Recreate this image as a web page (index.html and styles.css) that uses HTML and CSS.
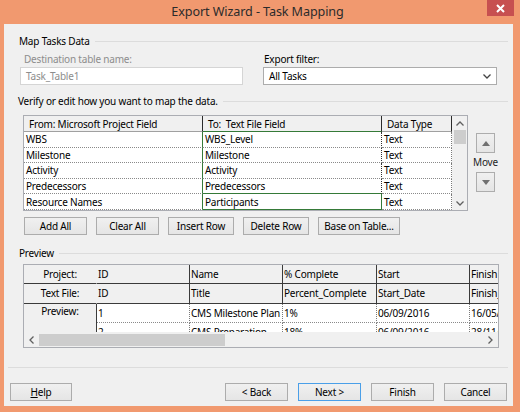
FILE: index.html
```html
<!DOCTYPE html>
<html lang="en">
<head>
  <meta charset="UTF-8">
  <title>Export Wizard - Task Mapping</title>
  <link rel="stylesheet" href="styles.css">
</head>
<body>
  <div class="window">
    <div class="titlebar">
      <div class="title">Export Wizard - Task Mapping</div>
      <button class="close-btn" aria-label="Close">
        <svg width="9" height="9" viewBox="0 0 9 9"><path d="M1 1L8 8M8 1L1 8" stroke="#fff" stroke-width="2"/></svg>
      </button>
    </div>

    <div class="panel">
      <!-- Destination / filter -->
      <div class="group-head">Map Tasks Data</div>
      <div class="fields">
        <div class="field field-dest">
          <label>Destination table name:</label>
          <div class="textbox">Task_Table1</div>
        </div>
        <div class="field field-filter">
          <label>Export filter:</label>
          <div class="select">
            <span>All Tasks</span>
            <svg width="8" height="5" viewBox="0 0 8 5"><path d="M0.5 0.5L4 4L7.5 0.5" fill="none" stroke="#444" stroke-width="1.3"/></svg>
          </div>
        </div>
      </div>

      <!-- Field mapping -->
      <div class="group-head verify">Verify or edit how you want to map the data.</div>
      <div class="mapping">
        <div class="map-grid">
          <table class="map-table">
            <colgroup><col class="c-from"><col class="c-to"><col class="c-type"></colgroup>
            <thead>
              <tr><th>From: Microsoft Project Field</th><th class="to-head">To:&nbsp; Text File Field</th><th>Data Type</th></tr>
            </thead>
            <tbody>
              <tr><td>WBS</td><td>WBS_Level</td><td>Text</td></tr>
              <tr><td>Milestone</td><td>Milestone</td><td>Text</td></tr>
              <tr><td>Activity</td><td>Activity</td><td>Text</td></tr>
              <tr><td>Predecessors</td><td class="above-sel">Predecessors</td><td>Text</td></tr>
              <tr><td>Resource Names</td><td class="selected">Participants</td><td>Text</td></tr>
            </tbody>
          </table>
          <div class="vscroll">
            <div class="arrow"><svg width="8" height="5" viewBox="0 0 8 5"><path d="M0.5 4.5L4 1L7.5 4.5" fill="none" stroke="#606060" stroke-width="1.3"/></svg></div>
            <div class="vthumb"></div>
            <div class="track"></div>
            <div class="arrow"><svg width="8" height="5" viewBox="0 0 8 5"><path d="M0.5 0.5L4 4L7.5 0.5" fill="none" stroke="#606060" stroke-width="1.3"/></svg></div>
          </div>
        </div>
        <div class="move">
          <button class="move-btn"><svg width="8" height="5" viewBox="0 0 8 5"><path d="M0 5L4 0L8 5Z" fill="#707070"/></svg></button>
          <div class="move-label">Move</div>
          <button class="move-btn"><svg width="8" height="5" viewBox="0 0 8 5"><path d="M0 0L8 0L4 5Z" fill="#707070"/></svg></button>
        </div>
      </div>
      <div class="map-buttons">
        <button class="btn w63">Add All</button>
        <button class="btn w63">Clear All</button>
        <button class="btn w66">Insert Row</button>
        <button class="btn w66">Delete Row</button>
        <button class="btn w82">Base on Table...</button>
      </div>

      <!-- Preview -->
      <div class="group-head preview-head">Preview</div>
      <div class="preview">
        <div class="preview-view">
          <table class="preview-table">
            <colgroup><col class="p-label"><col class="p-col"><col class="p-col"><col class="p-wide"><col class="p-col"><col class="p-col"></colgroup>
            <tr class="head-row r1">
              <td class="row-label">Project:</td><td>ID</td><td>Name</td><td>% Complete</td><td>Start</td><td>Finish</td>
            </tr>
            <tr class="head-row r2">
              <td class="row-label">Text File:</td><td>ID</td><td>Title</td><td>Percent_Complete</td><td>Start_Date</td><td>Finish_Date</td>
            </tr>
            <tr class="data-row">
              <td class="row-label preview-label" rowspan="2">Preview:</td><td>1</td><td>CMS Milestone Plan</td><td>1%</td><td>06/09/2016</td><td>16/05/2016</td>
            </tr>
            <tr class="data-row">
              <td>2</td><td>CMS Preparation</td><td>18%</td><td>06/09/2016</td><td>28/11/2016</td>
            </tr>
          </table>
        </div>
        <div class="hscroll">
          <div class="harrow"><svg width="5" height="8" viewBox="0 0 5 8"><path d="M4.5 0.5L1 4L4.5 7.5" fill="none" stroke="#606060" stroke-width="1.3"/></svg></div>
          <div class="hthumb"></div>
          <div class="track"></div>
          <div class="harrow"><svg width="5" height="8" viewBox="0 0 5 8"><path d="M0.5 0.5L4 4L0.5 7.5" fill="none" stroke="#606060" stroke-width="1.3"/></svg></div>
        </div>
      </div>

      <div class="footer-rule"></div>
      <div class="footer">
        <button class="btn w62"><u>H</u>elp</button>
        <div class="spacer"></div>
        <div class="footer-right">
          <button class="btn w63">&lt; Back</button>
          <button class="btn w63 btn-default">Next &gt;</button>
          <button class="btn w63">Finish</button>
          <button class="btn w63">Cancel</button>
        </div>
      </div>
    </div>
  </div>
</body>
</html>
```

FILE: styles.css
```css
* {
  box-sizing: border-box;
}

body {
  margin: 0;
  background-color: #f1996f;
  font-family: "Noto Sans", sans-serif;
  font-size: 10px;
  letter-spacing: -0.2px;
  color: #000;
}

.window {
  width: 520px;
  height: 412px;
  background-color: #f1996f;
}

/* Title bar */
.titlebar {
  height: 24px;
  display: grid;
  grid-template-columns: 1fr auto 1fr;
  align-items: start;
}

.title {
  grid-column: 2;
  font-size: 12.6px;
  letter-spacing: -0.1px;
  line-height: 24px;
  color: #2b2b2b;
  padding-right: 5px;
}

.close-btn {
  grid-column: 3;
  justify-self: end;
  margin-right: 6px;
  width: 27px;
  height: 16px;
  border: 0;
  padding: 0;
  background-color: #c75050;
  display: flex;
  align-items: center;
  justify-content: center;
}

/* Client area */
.panel {
  margin-left: 4px;
  width: 509px;
  height: 382px;
  background-color: #f0f0f0;
  padding: 10px 0 6px;
}

.group-head {
  display: flex;
  align-items: center;
  gap: 5px;
  height: 15px;
  line-height: 15px;
  margin: 0 5px 0 15px;
  white-space: nowrap;
}

.group-head::after {
  content: "";
  flex: 1;
  height: 1px;
  background-color: #dcdcdc;
}

.group-head.verify {
  margin-top: 9px;
  margin-left: 14px;
}

.group-head.preview-head {
  margin-top: 11px;
}

.fields {
  display: flex;
  gap: 20px;
  margin: 3px 0 0 16px;
}

.field label {
  display: block;
  line-height: 15px;
}

.field-dest {
  width: 223px;
}

.field-dest label {
  padding-left: 4px;
  color: #8d8d8d;
}

.field-filter {
  width: 234px;
}

.field-filter label {
  padding-left: 1px;
}

.textbox {
  height: 18px;
  border: 1px solid #d5d5d5;
  background-color: #fff;
  color: #8d8d8d;
  padding-left: 5px;
  line-height: 16px;
}

.select {
  height: 18px;
  border: 1px solid #acacac;
  background-color: #fff;
  display: flex;
  align-items: center;
  justify-content: space-between;
  padding: 0 5px 0 5px;
}

/* Mapping grid */
.mapping {
  display: flex;
  margin: 6px 0 0 19px;
}

.map-grid {
  display: flex;
  width: 445px;
  height: 96px;
  border: 1px solid #abadb3;
  background-color: #fff;
  overflow: hidden;
}

.map-table {
  border-collapse: separate;
  border-spacing: 0;
  table-layout: fixed;
  width: 428px;
  flex: none;
  align-self: flex-start;
}

.c-from { width: 179px; }
.c-to { width: 179px; }
.c-type { width: 70px; }

.map-table th {
  height: 16px;
  padding: 0 4px 0 5px;
  font-weight: normal;
  text-align: left;
  line-height: 14px;
  background-color: #f0f0f0;
  border-right: 1px solid #2b2b2b;
  border-bottom: 1px solid #a0a0a0;
  white-space: nowrap;
  overflow: hidden;
}

.map-table th.to-head {
  border-bottom-color: #357a38;
}

.map-table td {
  height: 15.6px;
  padding: 0 2px;
  line-height: 14px;
  border-right: 1px dotted #7a7a7a;
  border-bottom: 1px dotted #8a8a8a;
  white-space: nowrap;
  overflow: hidden;
}

.map-table td:first-child {
  border-right: 1px solid #357a38;
}

.map-table td:nth-child(2) {
  border-right-color: #333;
}

.map-table td.above-sel {
  border-bottom: 1px solid #357a38;
}

.map-table td.selected {
  border-right: 1px solid #357a38;
  border-bottom: 1px solid #357a38;
}

.vscroll {
  width: 15px;
  background-color: #f0f0f0;
  display: flex;
  flex-direction: column;
}

.arrow {
  height: 14px;
  display: flex;
  align-items: center;
  justify-content: center;
}

.vthumb {
  height: 14px;
  margin: 0 1px 0 2px;
  background-color: #cdcdcd;
}

.track {
  flex: 1;
}

.move {
  display: flex;
  flex-direction: column;
  align-items: center;
  width: 19px;
  margin-left: 8px;
  padding-top: 18px;
}

.move-btn {
  width: 19px;
  height: 20px;
  padding: 0;
  border: 1px solid #adadad;
  background: linear-gradient(#f0f0f0, #e5e5e5);
  display: flex;
  align-items: center;
  justify-content: center;
}

.move-label {
  line-height: 19px;
  color: #1e1e1e;
  white-space: nowrap;
}

/* Buttons */
.btn {
  height: 18px;
  padding: 0;
  border: 1px solid #acacac;
  background: linear-gradient(#f0f0f0, #e5e5e5);
  font: inherit;
  letter-spacing: inherit;
  color: #000;
  line-height: 16px;
  text-align: center;
}

.btn-default {
  border-color: #4a9fe8;
}

.w62 { width: 62px; }
.w63 { width: 63px; }
.w66 { width: 66px; }
.w82 { width: 82px; }

.map-buttons {
  display: flex;
  gap: 9px;
  margin: 6px 0 0 20px;
}

/* Preview grid */
.preview {
  margin: 3px 0 0 19px;
  width: 476px;
  height: 84px;
  border: 1px solid #abadb3;
  background-color: #fff;
  display: flex;
  flex-direction: column;
  overflow: hidden;
}

.preview-view {
  flex: 1;
  overflow: hidden;
}

.preview-table {
  table-layout: fixed;
  width: 539px;
  border-collapse: separate;
  border-spacing: 0;
}

.p-label { width: 73px; }
.p-col { width: 93px; }
.p-wide { width: 94px; }

.preview-table td {
  padding: 0 1px;
  line-height: 15px;
  white-space: nowrap;
  overflow: hidden;
  text-overflow: clip;
}

.head-row td {
  background-color: #f0f0f0;
  border-right: 1px solid #3b3b3b;
  border-bottom: 1px solid #3b3b3b;
}

.head-row.r1 td { height: 19px; }
.head-row.r2 td { height: 20px; }

.head-row td.row-label {
  border-right-color: #f0f0f0;
  text-align: center;
}

.data-row td {
  height: 19px;
  border-right: 1px dotted #7a7a7a;
  border-bottom: 1px dotted #8a8a8a;
}

.data-row td.preview-label {
  background-color: #f0f0f0;
  border-right: 1px solid #3b3b3b;
  border-bottom: 0;
  text-align: center;
  vertical-align: top;
}

.hscroll {
  height: 15px;
  flex: none;
  background-color: #f0f0f0;
  display: flex;
  align-items: stretch;
}

.harrow {
  width: 15px;
  display: flex;
  align-items: center;
  justify-content: center;
}

.hthumb {
  width: 186px;
  margin: 2px 0 1px;
  background-color: #cdcdcd;
}

/* Footer */
.footer-rule {
  height: 1px;
  margin: 19px 5px 0 4px;
  background-color: #dcdcdc;
}

.footer {
  display: flex;
  margin: 15px 6px 0;
}

.spacer {
  flex: 1;
}

.footer-right {
  display: flex;
  gap: 10px;
}
```
